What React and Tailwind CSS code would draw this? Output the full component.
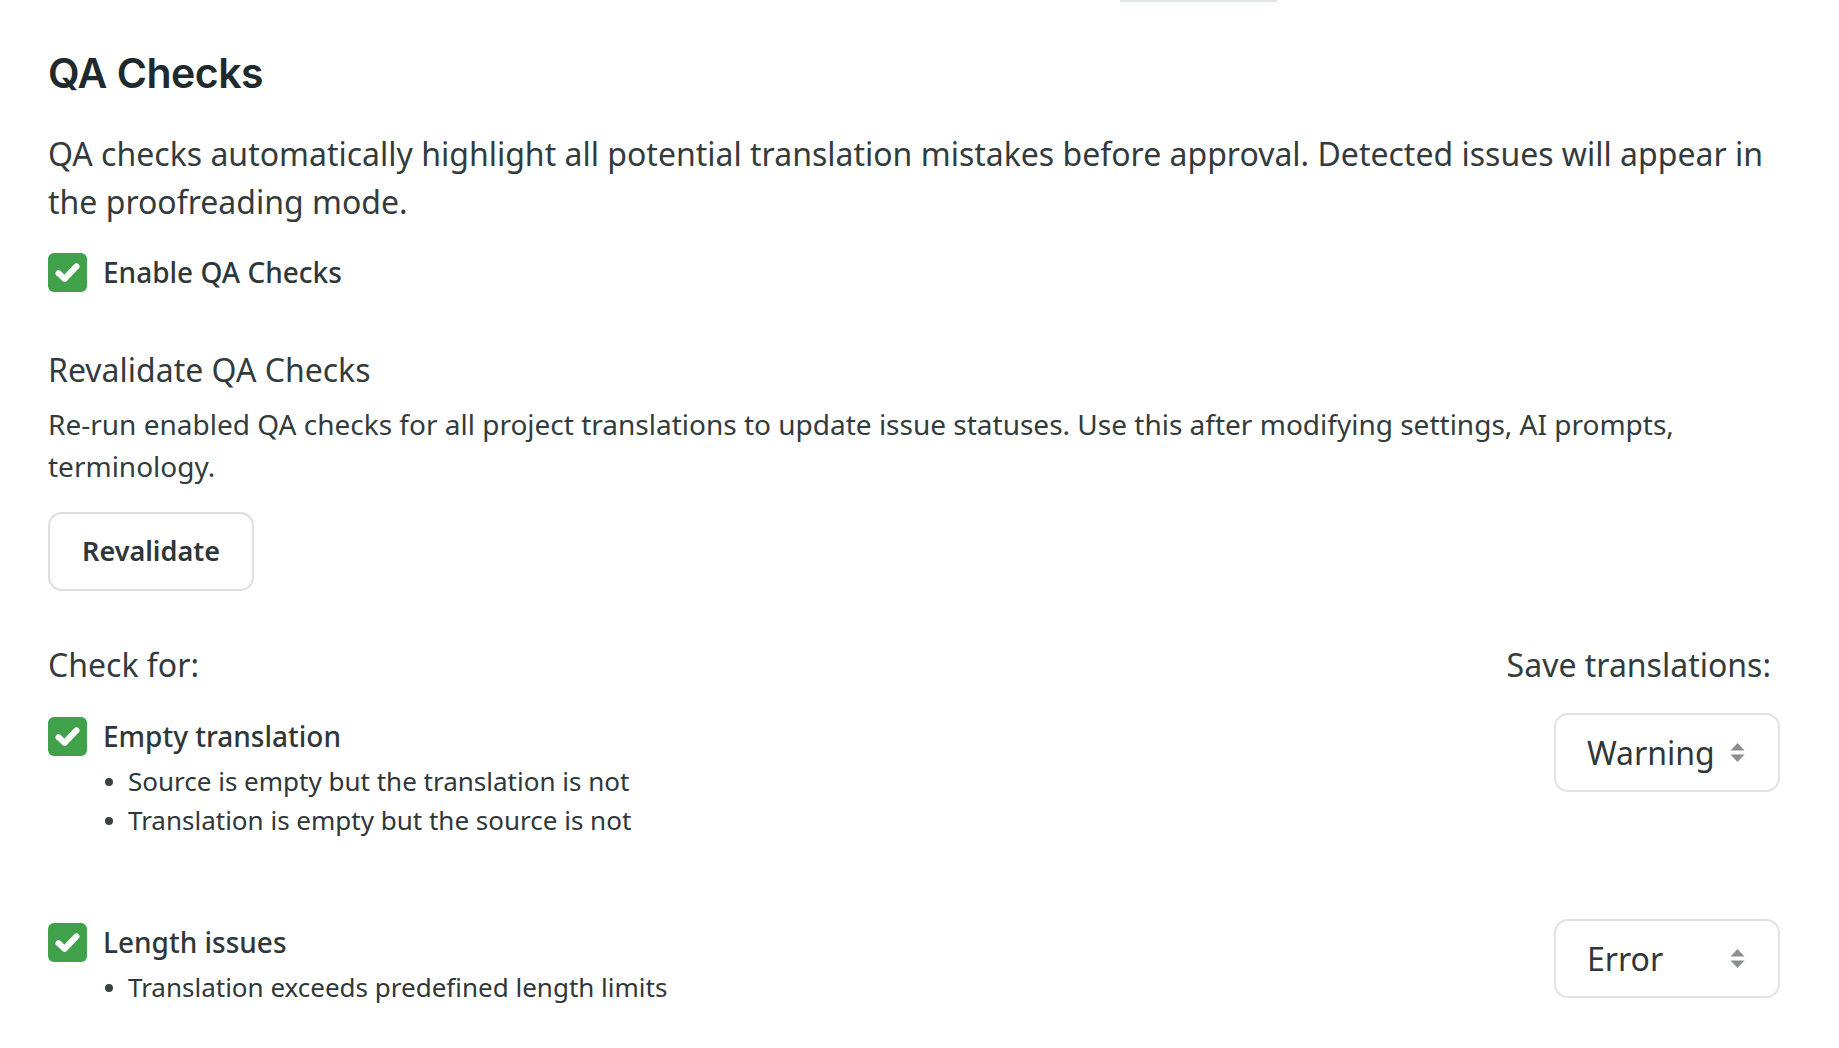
import React, { useState } from "react";

const body = { fontFamily: '"Noto Sans", "Open Sans", sans-serif' };

function GreenCheck({ checked, onChange }) {
  return (
    <button
      onClick={onChange}
      className={`flex h-[39px] w-[39px] shrink-0 items-center justify-center rounded-[6px] ${
        checked ? "bg-[#41a04a]" : "border-2 border-gray-300 bg-white"
      }`}
    >
      {checked && (
        <svg width="29" height="29" viewBox="0 0 24 24" fill="none">
          <path d="M4.6 12.6 L9.6 17.3 L19.4 6.9" stroke="white" strokeWidth="5" strokeLinecap="round" strokeLinejoin="round" />
        </svg>
      )}
    </button>
  );
}

function Select({ value }) {
  return (
    <div className="flex h-[79px] w-[226px] items-center justify-between rounded-[14px] border-2 border-[#e2e2e2] bg-white pl-[31px] pr-[33px]">
      <span className="text-[32px] text-[#2f3739]">{value}</span>
      {/* up/down arrows */}
      <svg width="15" height="21" viewBox="0 0 15 21">
        <path d="M7.5 1 L14.5 8.5 L0.5 8.5 Z" fill="#8c8f90" />
        <path d="M7.5 20 L14.5 12.5 L0.5 12.5 Z" fill="#8c8f90" />
      </svg>
    </div>
  );
}

function CheckItem({ label, bullets, level }) {
  const [on, setOn] = useState(true);
  return (
    <div className="flex items-start justify-between">
      <div className="pt-[2px]">
        <div className="flex items-center gap-[16px]">
          <GreenCheck checked={on} onChange={() => setOn(!on)} />
          <span className="text-[28px] font-medium text-[#2f3739]">{label}</span>
        </div>
        <ul className="mt-[5px] pl-[57px]">
          {bullets.map((b) => (
            <li key={b} className="flex items-center gap-[15px] text-[26px] leading-[39px] text-[#2f3739]">
              <span className="h-[8px] w-[8px] rounded-full bg-[#3a4244]" />
              {b}
            </li>
          ))}
        </ul>
      </div>
      <Select value={level} />
    </div>
  );
}

export default function App() {
  const [enabled, setEnabled] = useState(true);

  return (
    <div className="min-h-screen bg-white pl-[48px] pr-[59px] text-[#333b3d]" style={body}>
      <div className="ml-[1072px] h-[2px] w-[157px] bg-[#e4e7e9]" />

      <h1
        className="mt-[47px] text-[41px] font-semibold leading-[48px] tracking-[-0.5px] text-[#1f2a2e]"
        style={{ fontFamily: "Inter, sans-serif" }}
      >
        QA Checks
      </h1>

      <p className="mt-[33px] text-[32px] leading-[48px]">
        QA checks automatically highlight all potential translation mistakes before approval. Detected issues will appear in the proofreading mode.
      </p>

      <div className="mt-[25px] flex items-center gap-[16px]">
        <GreenCheck checked={enabled} onChange={() => setEnabled(!enabled)} />
        <span className="text-[28px] font-medium text-[#2f3739]">Enable QA Checks</span>
      </div>

      <h2 className="mt-[55px] text-[32px] leading-[44px]">Revalidate QA Checks</h2>
      <p className="mt-[11px] max-w-[1690px] text-[28px] leading-[42px]">
        Re-run enabled QA checks for all project translations to update issue statuses. Use this after modifying settings, AI prompts, terminology.
      </p>

      <button className="mt-[25px] h-[79px] w-[206px] rounded-[14px] border-2 border-[#dedede] bg-white text-[27px] font-semibold text-[#2f3739]">
        Revalidate
      </button>

      <div className="mt-[52px] flex items-center justify-between pr-[9px] text-[32px] leading-[44px]">
        <span>Check for:</span>
        <span>Save translations:</span>
      </div>

      <div className="mt-[26px] flex flex-col gap-[79px]">
        <CheckItem
          label="Empty translation"
          level="Warning"
          bullets={["Source is empty but the translation is not", "Translation is empty but the source is not"]}
        />
        <CheckItem
          label="Length issues"
          level="Error"
          bullets={["Translation exceeds predefined length limits"]}
        />
      </div>
    </div>
  );
}
